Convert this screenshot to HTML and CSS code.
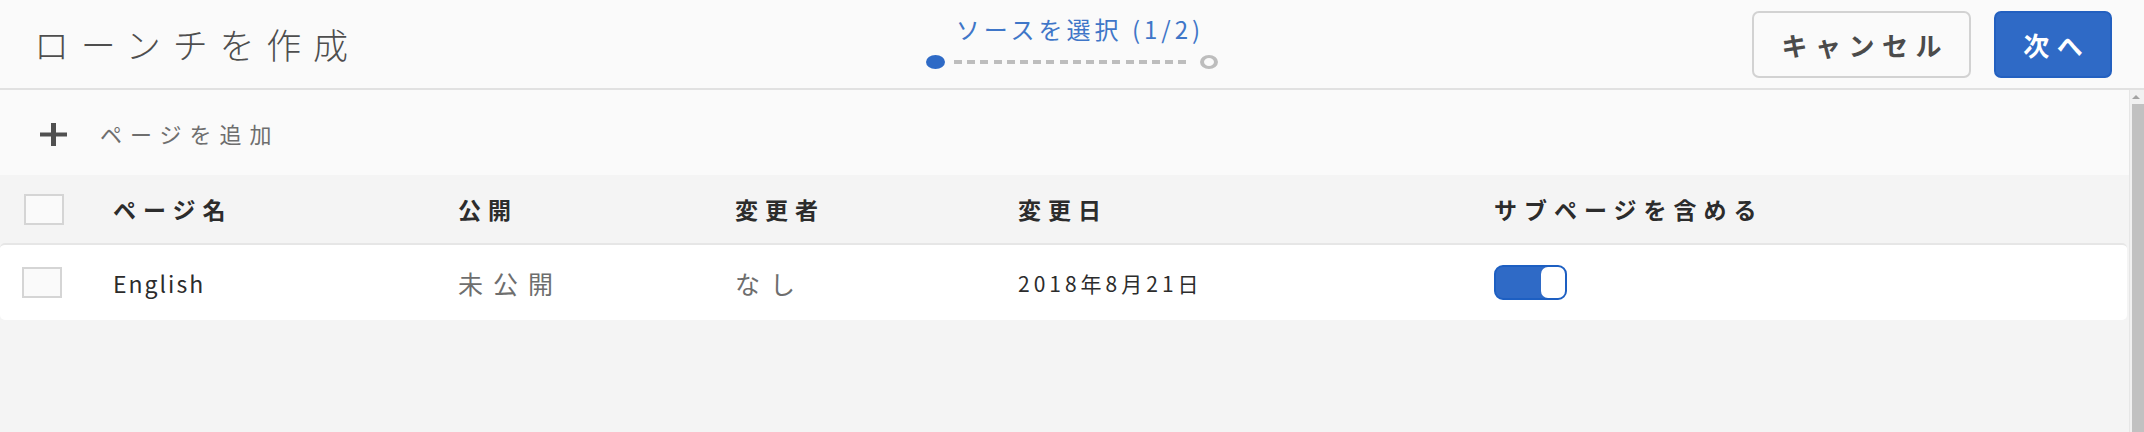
FILE: index.html
```html
<!DOCTYPE html>
<html lang="ja">
<head>
<meta charset="utf-8">
<title>ローンチを作成</title>
<link rel="stylesheet" href="styles.css">
</head>
<body>
<div class="app">
  <header class="header">
    <h1 class="title">ローンチを作成</h1>
    <div class="steps">
      <div class="step-label">ソースを選択 (1/2)</div>
      <div class="step-track">
        <span class="dot dot-active"></span>
        <span class="dashes"></span>
        <span class="dot dot-todo"></span>
      </div>
    </div>
    <div class="actions">
      <button class="btn btn-cancel">キャンセル</button>
      <button class="btn btn-next">次へ</button>
    </div>
  </header>
  <div class="main">
    <div class="content">
      <div class="toolbar">
        <svg class="plus" width="27" height="23" viewBox="0 0 27 23" aria-hidden="true">
          <rect x="11" y="0" width="5" height="23" fill="#505050"/>
          <rect x="0" y="9.5" width="27" height="4" fill="#505050"/>
        </svg>
        <span class="add-label">ページを追加</span>
      </div>
      <div class="table">
        <div class="thead grid">
          <div class="cell cell-check head-check"><span class="checkbox"></span></div>
          <div class="cell th">ページ名</div>
          <div class="cell th">公開</div>
          <div class="cell th">変更者</div>
          <div class="cell th">変更日</div>
          <div class="cell th">サブページを含める</div>
        </div>
        <div class="row grid">
          <div class="cell cell-check row-check"><span class="checkbox"></span></div>
          <div class="cell td td-latin">English</div>
          <div class="cell td td-muted">未公開</div>
          <div class="cell td td-muted">なし</div>
          <div class="cell td td-date">2018年8月21日</div>
          <div class="cell td"><span class="toggle"><span class="knob"></span></span></div>
        </div>
      </div>
    </div>
    <div class="scrollbar">
      <span class="arrow-up"></span>
      <span class="thumb"></span>
    </div>
  </div>
</div>
</body>
</html>
```

FILE: styles.css
```css
html, body {
  margin: 0;
  padding: 0;
  height: 100%;
}

body {
  background: #f4f4f4;
  font-family: "Noto Sans CJK JP", "Noto Sans", sans-serif;
  color: #2c2c2c;
}

.app {
  height: 100vh;
  display: flex;
  flex-direction: column;
}

/* ---------- header ---------- */
.header {
  height: 88px;
  flex: none;
  background: #fafafa;
  border-bottom: 2px solid #e1e1e1;
  display: grid;
  grid-template-columns: 1fr auto 1fr;
  align-items: center;
}

.title {
  margin: 0;
  padding-left: 34px;
  font-size: 35px;
  font-weight: 300;
  color: #4e4e4e;
  letter-spacing: 11.8px;
  line-height: 40px;
}

.steps {
  align-self: start;
  padding-top: 14px;
  display: flex;
  flex-direction: column;
  align-items: center;
}

.step-label {
  font-size: 24px;
  line-height: 30px;
  color: #3f76c8;
  letter-spacing: 4px;
  padding-left: 16px;
}

.step-track {
  margin-top: 11px;
  display: flex;
  align-items: center;
  gap: 9px;
  height: 14px;
}

.dot {
  display: block;
  width: 19px;
  height: 14px;
  border-radius: 50%;
  box-sizing: border-box;
}

.dot-active {
  background: #2e6ac6;
}

.dot-todo {
  width: 18px;
  border: 3px solid #bdbdbd;
  border-left-width: 4px;
  border-right-width: 4px;
  background: transparent;
}

.dashes {
  display: block;
  width: 237px;
  height: 4px;
  background: repeating-linear-gradient(to right, #bdbdbd 0 8px, transparent 8px 13.2px);
}

.actions {
  justify-self: end;
  padding-right: 32px;
  display: flex;
  gap: 23px;
}

.btn {
  box-sizing: border-box;
  height: 67px;
  border-radius: 7px;
  font-family: inherit;
  font-size: 26px;
  font-weight: 700;
  letter-spacing: 7.5px;
  padding: 0 0 0 7.5px;
  cursor: pointer;
}

.btn-cancel {
  width: 219px;
  background: #fafafa;
  border: 2px solid #d2d2d2;
  color: #4b4b4b;
}

.btn-next {
  width: 118px;
  background: #2f6ac6;
  border: 2px solid #2360c0;
  color: #ffffff;
}

/* ---------- main ---------- */
.main {
  flex: 1;
  display: flex;
  min-height: 0;
}

.content {
  flex: 1;
  display: flex;
  flex-direction: column;
}

.toolbar {
  height: 85px;
  background: #fafafa;
  display: flex;
  align-items: center;
  padding-left: 40px;
  gap: 33px;
}

.plus {
  display: block;
  margin-top: 4px;
}

.add-label {
  font-size: 22px;
  color: #6e6e6e;
  letter-spacing: 8px;
}

/* ---------- table ---------- */
.grid {
  display: grid;
  grid-template-columns: 113px 345px 277px 283px 476px 1fr;
  align-items: center;
}

.thead {
  height: 68px;
  background: #f4f4f4;
}

.row {
  height: 75px;
  background: #ffffff;
  border-top: 2px solid #e6e6e6;
  border-radius: 5px;
  margin-right: 2px;
}

.cell {
  display: flex;
  align-items: center;
}

.head-check {
  padding-left: 24px;
}

.row-check {
  padding-left: 22px;
}

.checkbox {
  display: block;
  box-sizing: border-box;
  width: 40px;
  height: 31px;
  background: #fafafa;
  border: 2px solid #d5d5d5;
}

.th {
  font-size: 23px;
  font-weight: 700;
  color: #2c2c2c;
  letter-spacing: 7px;
}

.td {
  font-size: 21px;
  color: #2c2c2c;
}

.td-latin {
  font-size: 23px;
  letter-spacing: 2px;
}

.td-muted {
  font-size: 25px;
  color: #6e6e6e;
  letter-spacing: 10px;
}

.td-date {
  letter-spacing: 4px;
}

.toggle {
  box-sizing: border-box;
  width: 73px;
  height: 35px;
  display: flex;
  justify-content: flex-end;
  background: #2f6ac6;
  border: 2px solid #1d5fc2;
  border-radius: 9px;
  margin-top: -1px;
}

.knob {
  display: block;
  width: 24px;
  height: 100%;
  background: #ffffff;
  border-radius: 7px;
}

/* ---------- scrollbar ---------- */
.scrollbar {
  width: 14px;
  flex: none;
  background: #f1f1f1;
  border-left: 1px solid #e6e6e6;
  display: flex;
  flex-direction: column;
  align-items: flex-end;
}

.arrow-up {
  display: block;
  width: 0;
  height: 0;
  margin: 5px 4px 5px 0;
  border-left: 4px solid transparent;
  border-right: 4px solid transparent;
  border-bottom: 4px solid #a3a3a3;
}

.thumb {
  display: block;
  flex: 1;
  width: 12px;
  background: #c1c1c1;
}
```
